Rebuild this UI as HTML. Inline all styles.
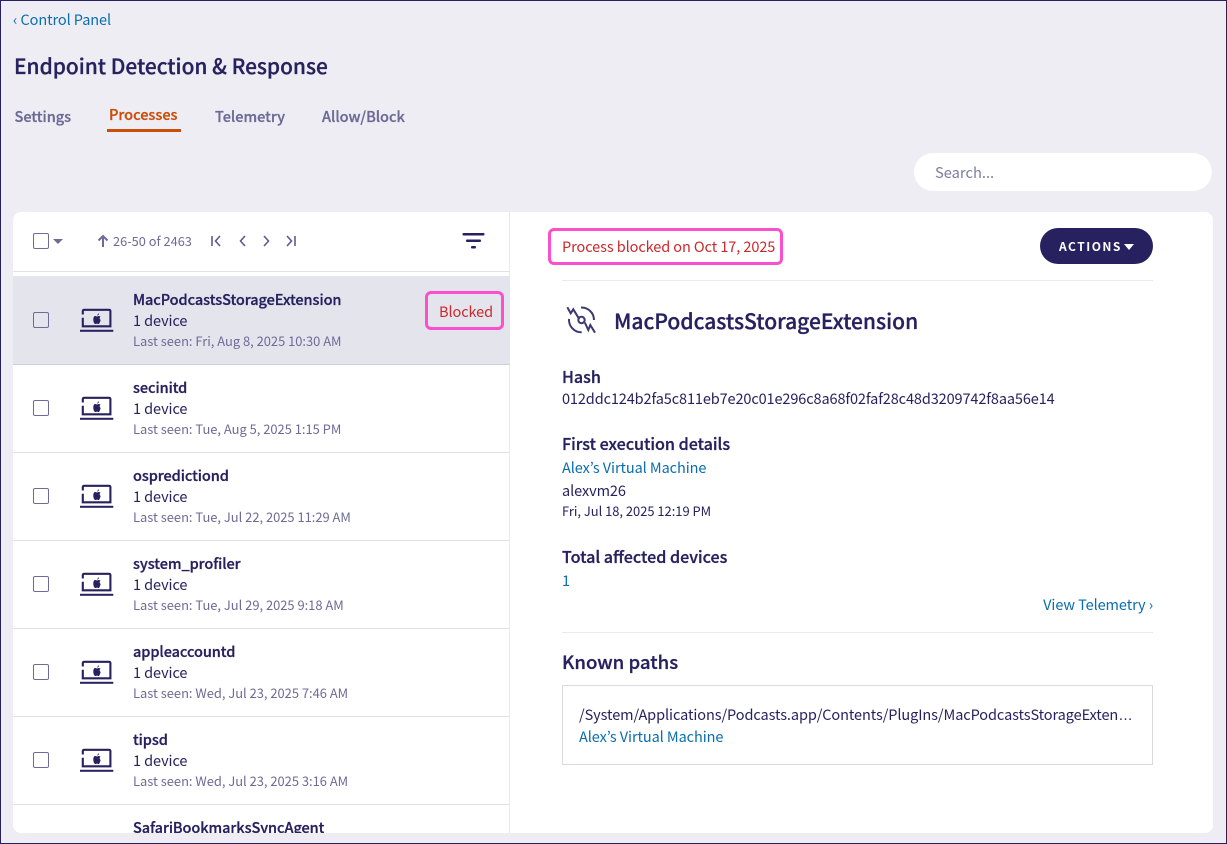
<!DOCTYPE html>
<html><head><meta charset="utf-8">
<style>
*{box-sizing:border-box}
html,body{margin:0;padding:0;width:1227px;height:844px;overflow:hidden;background:#eeedf3}
body{font-family:"Noto Sans CJK JP","Liberation Sans",sans-serif;color:#27225f;position:relative}
.frame{position:absolute;inset:0;border:1px solid #27225f;z-index:20;pointer-events:none}
.t{position:absolute;white-space:nowrap;line-height:20px}
.b{font-weight:500;-webkit-text-stroke:.3px currentColor}
.r{font-size:14.5px;letter-spacing:-.08px}
.card{position:absolute;left:13px;top:212px;width:1200px;height:621px;background:#fff;border-radius:8px;overflow:hidden}
.row{position:absolute;left:0;width:497px;height:88px;border-bottom:1px solid #e2e2e6}
.row .cb{position:absolute;left:20px;top:35px;width:16px;height:16px;border:1.5px solid #6f6a97;border-radius:2px;background:#fff}
.row svg{position:absolute;left:66px;top:31px}
.row .n{left:120px;top:13px;font-size:14.5px;letter-spacing:-.06px;font-weight:500;-webkit-text-stroke:.3px currentColor}
.row .d{left:120px;top:34px;font-size:14.5px;letter-spacing:-.08px}
.row .l{left:120px;top:54px;font-size:12.9px;color:#6f6a97}
.row.first{height:89px;background:#e4e4ec;border-bottom-color:#cfcfd6}
.row.first .cb{top:36px;background:#e4e4ec}
.row.first svg{top:32px}
.row.first .n{top:14px}
.row.first .d{top:35px}
.row.first .l{top:55px}
a{color:#0a6eae;text-decoration:none}
</style></head><body>
<div class="frame"></div>
<a class="t r" style="left:13px;top:10px">‹ Control Panel</a>
<div class="t b" style="left:14px;top:52px;font-size:20.9px;line-height:28px">Endpoint Detection &amp; Response</div>
<div class="t b" style="left:14.5px;top:107px;font-size:14.5px;color:#6f6a97">Settings</div>
<div class="t b" style="left:109px;top:105px;font-size:14.5px;color:#c94f0c">Processes</div>
<div style="position:absolute;left:107px;top:129px;width:74px;height:3px;background:#c94f0c"></div>
<div class="t b" style="left:215px;top:107px;font-size:14.5px;color:#6f6a97">Telemetry</div>
<div class="t b" style="left:322px;top:107px;font-size:14.5px;color:#6f6a97">Allow/Block</div>
<div style="position:absolute;left:914px;top:153px;width:298px;height:38px;border-radius:19px;background:#fff"></div>
<div class="t" style="left:935px;top:163px;font-size:14.7px;color:#7f7ba3">Search...</div>

<div class="card">
 <div style="position:absolute;left:496px;top:0;width:1px;height:621px;background:#e9e9ed"></div>
 <div style="position:absolute;left:20px;top:21px;width:16px;height:16px;border:1.5px solid #6f6a97;border-radius:2px"></div>
 <div style="position:absolute;left:40px;top:27px;width:0;height:0;border-left:5px solid transparent;border-right:5px solid transparent;border-top:5px solid #6f6a97"></div>
 <svg style="position:absolute;left:84px;top:22px" width="12" height="14" viewBox="0 0 12 14"><path d="M6 13V2M1.500 6.500 6 2l4.500 4.500" fill="none" stroke="#6f6a97" stroke-width="2"/></svg>
 <div class="t" style="left:100px;top:19px;font-size:12.8px;color:#6f6a97">26-50 of 2463</div>
 <svg style="position:absolute;left:197px;top:22px" width="90" height="14" viewBox="0 0 90 14" fill="none" stroke="#5f5a8c" stroke-width="1.600"><path d="M2 2v10M10 2 5.500 7l4.500 5"/><path d="M35 2 30.500 7l4.500 5"/><path d="M54 2l4.500 5L54 12"/><path d="M77 2l4.500 5L77 12M85 2v10"/></svg>
 <svg style="position:absolute;left:449px;top:20px" width="24" height="18" viewBox="0 0 24 18" fill="#27225f"><rect x="0.500" y="1" width="22" height="2.500" rx="1"/><rect x="4" y="7.500" width="15" height="2.500" rx="1"/><rect x="9" y="14" width="5" height="2.500" rx="1"/></svg>
 <div style="position:absolute;left:0;top:59px;width:497px;height:1px;background:#e2e2e6"></div>

 <div class="row first" style="top:64px">
  <div class="cb"></div>
  <svg width="36" height="26" viewBox="0 0 36 26"><use href="#lap"/></svg>
  <div class="t n">MacPodcastsStorageExtension</div><div class="t d">1 device</div><div class="t l">Last seen: Fri, Aug 8, 2025 10:30 AM</div>
  <div class="t r" style="left:426px;top:26px;color:#c9282d">Blocked</div>
 </div>
 <div class="row" style="top:153px">
  <div class="cb"></div><svg width="36" height="26" viewBox="0 0 36 26"><use href="#lap"/></svg>
  <div class="t n">secinitd</div><div class="t d">1 device</div><div class="t l">Last seen: Tue, Aug 5, 2025 1:15 PM</div>
 </div>
 <div class="row" style="top:241px">
  <div class="cb"></div><svg width="36" height="26" viewBox="0 0 36 26"><use href="#lap"/></svg>
  <div class="t n">ospredictiond</div><div class="t d">1 device</div><div class="t l">Last seen: Tue, Jul 22, 2025 11:29 AM</div>
 </div>
 <div class="row" style="top:329px">
  <div class="cb"></div><svg width="36" height="26" viewBox="0 0 36 26"><use href="#lap"/></svg>
  <div class="t n">system_profiler</div><div class="t d">1 device</div><div class="t l">Last seen: Tue, Jul 29, 2025 9:18 AM</div>
 </div>
 <div class="row" style="top:417px">
  <div class="cb"></div><svg width="36" height="26" viewBox="0 0 36 26"><use href="#lap"/></svg>
  <div class="t n">appleaccountd</div><div class="t d">1 device</div><div class="t l">Last seen: Wed, Jul 23, 2025 7:46 AM</div>
 </div>
 <div class="row" style="top:505px">
  <div class="cb"></div><svg width="36" height="26" viewBox="0 0 36 26"><use href="#lap"/></svg>
  <div class="t n">tipsd</div><div class="t d">1 device</div><div class="t l">Last seen: Wed, Jul 23, 2025 3:16 AM</div>
 </div>
 <div class="row" style="top:593px;height:28px;border:0;overflow:hidden">
  <div class="t n" style="height:15px;overflow:hidden">SafariBookmarksSyncAgent</div>
 </div>

 <div style="position:absolute;left:549px;top:68px;width:591px;height:1px;background:#e9e9ed"></div>
 <div style="position:absolute;left:549px;top:420px;width:591px;height:1px;background:#e9e9ed"></div>
</div>

<svg width="0" height="0" style="position:absolute"><defs>
 <g id="lap"><path d="M3.800 6.500V3.200Q3.800 1.800 5.200 1.800H30Q31.400 1.800 31.400 3.200V18.300H3.800V9.800" fill="none" stroke="#27225f" stroke-width="2.100"/><rect x="1" y="21.800" width="33.300" height="2" fill="#27225f"/><path d="M18.200 7.600c.2-1 .8-1.800 1.800-2.300.1 1.200-.6 2-1.800 2.300zM16 8c.8 0 1.300.4 2 .4s1.200-.4 2-.4c.6 0 1.100.3 1.500.8-1.200.8-1 2.600.2 3.100-.4 1.200-1.200 4.100-2 4.100-.6 0-1-.4-1.700-.4s-1.100.4-1.700.4c-1 0-2-2.200-2-4.400 0-2.200.8-3.600 1.700-3.600z" fill="#27225f"/></g>
</defs></svg>

<div style="position:absolute;left:425px;top:291px;width:79px;height:39px;border:3px solid #fb4fce;border-radius:6px"></div>
<div style="position:absolute;left:548px;top:228px;width:235px;height:37px;border:3px solid #fb4fce;border-radius:6px"></div>
<div class="t r" style="left:562px;top:237px;color:#c9282d">Process blocked on Oct 17, 2025</div>
<div style="position:absolute;left:1040px;top:228px;width:113px;height:36px;border-radius:18px;background:#27225f"></div>
<div class="t" style="left:1059px;top:237px;font-size:12px;font-weight:700;letter-spacing:1.500px;color:#fff">ACTIONS</div>
<div style="position:absolute;left:1124px;top:244px;width:0;height:0;border-left:5.500px solid transparent;border-right:5.500px solid transparent;border-top:6px solid #fff"></div>

<svg style="position:absolute;left:565px;top:304px" width="32" height="32" viewBox="0 0 32 32" fill="none" stroke="#3d3873" stroke-width="2"><path d="M2.300 3.300 5.700 9.300 8.300 5.300 13.400 13.700"/><path d="M19.800 18.500 23.300 26 25.300 21 30 28.700"/><circle cx="16.500" cy="16" r="3.200"/><path d="M16 3.500A12.500 12.500 0 0 1 29 16"/><path d="M4 15A12.500 12.500 0 0 0 16.700 28.300"/></svg>
<div class="t b" style="left:614px;top:307px;font-size:21px;line-height:28px">MacPodcastsStorageExtension</div>
<div class="t b" style="left:562px;top:366px;font-size:16.100px">Hash</div>
<div class="t" style="left:562px;top:389px;font-size:14.5px;letter-spacing:-.11px">012ddc124b2fa5c811eb7e20c01e296c8a68f02faf28c48d3209742f8aa56e14</div>
<div class="t b" style="left:562px;top:433px;font-size:16.100px">First execution details</div>
<a class="t r" style="left:562px;top:458px">Alex’s Virtual Machine</a>
<div class="t r" style="left:562px;top:481px">alexvm26</div>
<div class="t" style="left:562px;top:501px;font-size:12.900px">Fri, Jul 18, 2025 12:19 PM</div>
<div class="t b" style="left:562px;top:546px;font-size:16.100px">Total affected devices</div>
<a class="t r" style="left:562px;top:571px">1</a>
<a class="t r" style="right:74px;top:595px">View Telemetry ›</a>
<div class="t b" style="left:562px;top:652px;font-size:18.600px">Known paths</div>
<div style="position:absolute;left:562px;top:685px;width:591px;height:80px;border:1px solid #d9d9df"></div>
<div class="t r" style="left:579px;top:705px">/System/Applications/Podcasts.app/Contents/PlugIns/MacPodcastsStorageExten<span style="font-family:'Liberation Sans',sans-serif">…</span></div>
<a class="t r" style="left:579px;top:727px">Alex’s Virtual Machine</a>
</body></html>
